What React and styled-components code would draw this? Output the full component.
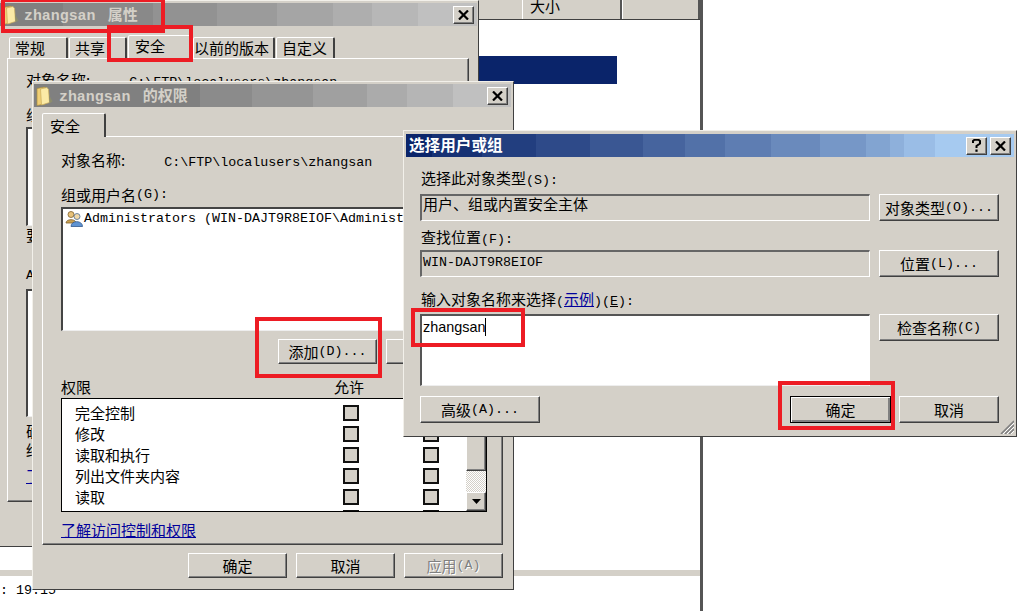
import styled, { createGlobalStyle, css } from 'styled-components'

const FACE = '#d4d0c8'
const CJK = `"Noto Sans CJK SC", "Liberation Sans", sans-serif`
const MONO = `"Liberation Mono", "Noto Sans CJK SC", monospace`

const bands = (from, to, stops) => {
	const a = from.match(/\w\w/g).map(h => parseInt(h, 16))
	const b = to.match(/\w\w/g).map(h => parseInt(h, 16))
	const parts = []
	let prev = 0
	stops.forEach((stop, i) => {
		const t = i / (stops.length - 1)
		const c = a.map((v, k) => Math.round(v + (b[k] - v) * t))
		parts.push(`rgb(${c.join(',')}) ${prev}px ${stop}px`)
		prev = stop
	})
	return `linear-gradient(90deg, ${parts.join(', ')})`
}

const Global = createGlobalStyle`
	html, body {
		margin: 0;
		padding: 0;
		background: #fff;
	}
	#root {
		width: 1023px;
		height: 611px;
		position: relative;
		overflow: hidden;
		font-family: ${CJK};
		font-size: 15px;
		line-height: 16px;
		color: #000;
	}
`

const raised = css`
	border-style: solid;
	border-width: 1px;
	border-color: #fff #404040 #404040 #fff;
	box-shadow: inset -1px -1px 0 #808080;
`

const Latin = styled.span`
	font-family: ${MONO};
	font-size: 13.33px;
`

/* explorer window behind the dialogs */
const Explorer = styled.div`
	position: absolute;
	left: 0;
	top: 0;
	width: 703px;
	height: 611px;
	box-sizing: border-box;
	border-right: 3px solid;
	border-image: linear-gradient(90deg, ${FACE} 0 1px, #555 1px 3px) 1;
	display: flex;
	flex-direction: column;
`
const HeaderRow = styled.div`
	height: 20px;
	flex: none;
	display: flex;
	justify-content: flex-end;
	background: ${FACE};
	border-bottom: 1px solid #404040;
	box-sizing: border-box;
`
const HeaderCell = styled.div`
	width: ${p => p.$w}px;
	box-sizing: border-box;
	padding-left: 7px;
	border-right: 2px solid #555;
	border-left: 1px solid #fff;
	margin-top: -2px;
	line-height: 16px;
`
const FileList = styled.div`
	flex: 1;
	padding-top: 36px;
`
const SelectedRow = styled.div`
	width: 617px;
	height: 28px;
	background: #0a246a;
`
const StatusStrip = styled.div`
	height: 6px;
	margin-top: 486px;
	background: ${FACE};
`
const StatusText = styled.div`
	font-family: ${MONO};
	font-size: 13.33px;
	margin-top: 7px;
	white-space: pre;
`

/* dialogs */
const Window = styled.div`
	position: absolute;
	left: ${p => p.$l}px;
	top: ${p => p.$t}px;
	width: ${p => p.$w}px;
	height: ${p => p.$h}px;
	box-sizing: border-box;
	background: ${FACE};
	border: 1px solid;
	border-color: #f2f0ea #404040 #404040 #f2f0ea;
	padding: ${p => p.$pad};
	display: flex;
	flex-direction: column;
	overflow: hidden;
`
const TitleBar = styled.div`
	height: ${p => p.$h}px;
	flex: none;
	display: flex;
	align-items: center;
	gap: 3px;
	padding-right: 3px;
	background: ${p => p.$bg};
	color: ${p => (p.$active ? '#fff' : FACE)};
	font-weight: 700;
`
const TitleText = styled.span`
	flex: 1;
	white-space: pre;
	padding-left: ${p => p.$pad}px;
	padding-bottom: ${p => (p.$active ? 3 : 0)}px;
	font-size: ${p => (p.$active ? 15.6 : 15)}px;
`
const TitleLatin = styled.span`
	font-family: ${MONO};
	font-size: 14.9px;
	font-weight: 700;
`
const CaptionButton = styled.div`
	width: 21px;
	height: 18px;
	flex: none;
	display: flex;
	align-items: center;
	justify-content: center;
	box-sizing: border-box;
	background: ${FACE};
	${raised}
`

const TabRow = styled.div`
	height: 21px;
	flex: none;
	display: flex;
	align-items: flex-end;
	gap: ${p => p.$gap || 0}px;
	margin-top: ${p => p.$top}px;
	padding-left: ${p => p.$left}px;
`
const Tab = styled.div`
	width: ${p => p.$w}px;
	height: ${p => (p.$on ? 24 : 21)}px;
	margin-bottom: ${p => (p.$on ? -1 : 0)}px;
	box-sizing: border-box;
	padding: ${p => p.$top ?? 2}px 0 0 ${p => p.$pad ?? 5}px;
	background: ${FACE};
	border-style: solid;
	border-width: 1px 2px 0 1px;
	border-color: #fff #404040 transparent #fff;
	border-radius: 2px 2px 0 0;
	position: relative;
	z-index: ${p => (p.$on ? 1 : 0)};
	white-space: nowrap;
`
const Page = styled.div`
	flex: ${p => (p.$h ? 'none' : 1)};
	height: ${p => (p.$h ? `${p.$h}px` : 'auto')};
	box-sizing: border-box;
	margin: 0 ${p => p.$right}px 0 ${p => p.$left}px;
	padding: ${p => p.$pad};
	${raised}
	display: flex;
	flex-direction: column;
	overflow: hidden;
`
const Line = styled.div`
	display: flex;
	height: 16px;
	margin-top: ${p => p.$top || 0}px;
	flex: none;
	white-space: pre;
`
const LineValue = styled.span`
	margin-left: ${p => p.$at}px;
`
const Sunken = styled.div`
	height: ${p => p.$h}px;
	width: ${p => p.$w}px;
	margin-top: ${p => p.$top || 0}px;
	flex: none;
	box-sizing: border-box;
	background: #fff;
	border-style: solid;
	border-width: 2px 1px 1px 2px;
	border-color: #444 ${FACE} #eee #444;
	display: flex;
	align-items: flex-start;
	padding: 1px 3px;
	white-space: nowrap;
	overflow: hidden;
`
const ListRow = styled.div`
	display: flex;
	align-items: center;
	gap: 1px;
	height: 18px;
	margin-left: -1px;
`
const Button = styled.div`
	width: ${p => p.$w}px;
	height: ${p => p.$h || 25}px;
	flex: none;
	box-sizing: border-box;
	display: flex;
	align-items: center;
	justify-content: center;
	white-space: pre;
	background: ${FACE};
	${raised}
	${p => p.$primary && css`
		border-color: #000;
		box-shadow: inset 1px 1px 0 #fff, inset -2px -2px 0 #808080;
	`}
	${p => p.$disabled && css`
		color: #808080;
		text-shadow: 1px 1px 0 #fff;
	`}
`
const ButtonRow = styled.div`
	display: flex;
	gap: 9px;
	flex: none;
	margin-top: ${p => p.$top || 0}px;
	justify-content: flex-end;
	padding-right: ${p => p.$right || 0}px;
`
const PermHead = styled.div`
	display: grid;
	grid-template-columns: 273px 80px auto;
	height: 16px;
	margin-top: 15px;
	flex: none;
`
const PermList = styled.div`
	width: 426px;
	height: 114px;
	margin-top: 3px;
	flex: none;
	box-sizing: border-box;
	background: #fff;
	border: 1px solid #000;
	display: flex;
	overflow: hidden;
`
const PermRows = styled.div`
	flex: 1;
	padding-top: 3px;
`
const PermRow = styled.div`
	display: grid;
	grid-template-columns: 268px 80px 16px;
	height: 21px;
	align-items: center;
	padding-left: 13px;
`
const Check = styled.div`
	width: 16px;
	height: 16px;
	box-sizing: border-box;
	border: 2px solid #111;
	background: ${FACE};
`
const ScrollBar = styled.div`
	width: 20px;
	flex: none;
	display: flex;
	flex-direction: column;
	background: repeating-conic-gradient(${FACE} 0 25%, #fff 0 50%) 0 0 / 2px 2px;
`
const ScrollThumb = styled.div`
	height: 72px;
	flex: none;
	box-sizing: border-box;
	background: ${FACE};
	${raised}
`
const ScrollArrow = styled.div`
	height: 19px;
	margin-top: auto;
	flex: none;
	box-sizing: border-box;
	background: ${FACE};
	display: flex;
	align-items: center;
	justify-content: center;
	${raised}
`
const Link = styled.span`
	color: #00009c;
	text-decoration: underline;
`
const UnderLatin = styled(Latin)`
	text-decoration: underline;
`
const BottomLink = styled.div`
	height: 16px;
	margin-top: 10px;
	flex: none;
`
const SelectGrid = styled.div`
	display: grid;
	grid-template-columns: 450px 120px;
	column-gap: 9px;
	padding: 13px 0 0 14px;
`
const GridLabel = styled.div`
	grid-column: 1 / -1;
	height: 16px;
	margin: ${p => p.$top || 0}px 0 ${p => p.$bottom}px 1px;
`
const ReadBox = styled.div`
	height: 27px;
	box-sizing: border-box;
	background: ${FACE};
	border-style: solid;
	border-width: 2px 1px 1px 2px;
	border-color: #666 #fff #fff #666;
	padding-left: 1px;
	line-height: 15px;
	white-space: pre;
`
const NameInput = styled.div`
	height: 72px;
	box-sizing: border-box;
	background: #fff;
	border-style: solid;
	border-width: 2px 1px 1px 2px;
	border-color: #555 #fff #eee #555;
	padding: 2px 1px;
	font-family: "Liberation Sans", sans-serif;
	font-size: 14.4px;
	line-height: 18px;
`
const Caret = styled.span`
	display: inline-block;
	width: 1px;
	height: 18px;
	background: #000;
	vertical-align: top;
`
const SelectFooter = styled.div`
	display: flex;
	gap: 8px;
	margin-top: 10px;
	padding: 0 0 0 14px;
	width: 593px;
	box-sizing: border-box;
`
const FooterGap = styled.div`
	flex: 1;
`
const Grip = styled.svg`
	position: absolute;
	right: 2px;
	bottom: 2px;
`
const RedBox = styled.div`
	position: absolute;
	left: ${p => p.$l}px;
	top: ${p => p.$t}px;
	width: ${p => p.$w}px;
	height: ${p => p.$h}px;
	box-sizing: border-box;
	border: 4px solid #ed1c24;
	z-index: 5;
`
const FolderIcon = styled.svg`
	flex: none;
	margin-left: 2px;
`

const Folder = () => (
	<FolderIcon width="17" height="20" viewBox="0 0 17 20">
		<path d="M1 2.5 L9 1 L9 18 L1 19.5 Z" fill="#f0cf76" stroke="#a98c3e" strokeWidth=".7" />
		<path d="M4.5 3 L11 1.5 L12.5 3.5 L13.5 16.5 L5.5 19 Z" fill="#fbeaa6" stroke="#c8ac5c" strokeWidth=".7" />
		<path d="M13 9 L16.5 15.5 L13.5 17.5 Z" fill="#8d8d6c" />
	</FolderIcon>
)

const Users = () => (
	<svg width="18" height="18" viewBox="0 0 18 18">
		<circle cx="6" cy="4.5" r="3" fill="#e8c27a" stroke="#7d5f2c" strokeWidth=".8" />
		<path d="M1 13 C1 8.5 11 8.5 11 13 Z" fill="#c9a050" stroke="#7d5f2c" strokeWidth=".8" />
		<circle cx="12" cy="6.5" r="3" fill="#f0d8a8" stroke="#4d6c94" strokeWidth=".8" />
		<path d="M6 16.5 C6 10 17.5 10 17.5 16.5 Z" fill="#5f93d2" stroke="#32598d" strokeWidth=".8" />
	</svg>
)

const CloseGlyph = () => (
	<svg width="11" height="10" viewBox="0 0 11 10">
		<path d="M1 0.5 L10 9.5 M10 0.5 L1 9.5" stroke="#000" strokeWidth="2.2" />
	</svg>
)

const HelpGlyph = () => (
	<svg width="9" height="13" viewBox="0 0 9 13">
		<path d="M1 4 V2 L2.5 0.8 H6.5 L8 2 V4.5 L4.5 7 V9" fill="none" stroke="#000" strokeWidth="2" />
		<path d="M3.4 10.5 H5.6 V12.8 H3.4 Z" fill="#000" />
	</svg>
)

const DownGlyph = () => (
	<svg width="9" height="5" viewBox="0 0 9 5">
		<path d="M0 0 H9 L4.5 5 Z" fill="#000" />
	</svg>
)

const perms = ['完全控制', '修改', '读取和执行', '列出文件夹内容', '读取', '写入']

const PropertiesWindow = () => (
	<Window $l={-2} $t={0} $w={481} $h={547} $pad="2px 1px">
		<TitleBar $h={23} $bg={bands('808080', 'c0c0c0', [63, 153, 217, 277, 333, 372, 418, 480])}>
			<Folder />
			<TitleText $pad={2}>
				<TitleLatin>zhangsan </TitleLatin> 属性
			</TitleText>
			<CaptionButton><CloseGlyph /></CaptionButton>
		</TitleBar>
		<TabRow $top={11} $left={9} $gap={1}>
			<Tab $w={59}>常规</Tab>
			<Tab $w={58}>共享</Tab>
			<Tab $w={64} $on $pad={6}>安全</Tab>
			<Tab $w={82} $pad={0}>以前的版本</Tab>
			<Tab $w={59}>自定义</Tab>
		</TabRow>
		<Page $left={7} $right={8} $h={444} $pad="13px 0 0 18px">
			<Line>
				对象名称:<LineValue $at={39}><Latin>C:\FTP\localusers\zhangsan</Latin></LineValue>
			</Line>
			<Line $top={19}>组</Line>
			<Sunken $w={300} $h={99} $top={4} />
			<Line $top={1}>要</Line>
			<Line $top={25}><Latin>A</Latin></Line>
			<Sunken $w={300} $h={128} $top={5} />
			<Line $top={6}>确</Line>
			<Line $top={3}>终</Line>
			<Line $top={10}><Link>了</Link></Line>
		</Page>
	</Window>
)

const PermissionWindow = () => (
	<Window $l={32} $t={81} $w={482} $h={509} $pad="2px 2px 2px 1px">
		<TitleBar $h={23} $bg={bands('808080', 'c0c0c0', [166, 218, 279, 333, 373, 419, 480])}>
			<Folder />
			<TitleText $pad={3}>
				<TitleLatin>zhangsan </TitleLatin> 的权限
			</TitleText>
			<CaptionButton><CloseGlyph /></CaptionButton>
		</TitleBar>
		<TabRow $top={8} $left={8}>
			<Tab $w={64} $on $pad={7} $top={4}>安全</Tab>
		</TabRow>
		<Page $left={8} $right={8} $h={409} $pad="15px 0 0 18px">
			<Line>
				对象名称:<LineValue $at={39}><Latin>C:\FTP\localusers\zhangsan</Latin></LineValue>
			</Line>
			<Line $top={19}>组或用户名<Latin>(G):</Latin></Line>
			<Sunken $w={426} $h={124} $top={4}>
				<ListRow>
					<Users />
					<Latin>Administrators (WIN-DAJT9R8EIOF\Administrators)</Latin>
				</ListRow>
			</Sunken>
			<ButtonRow $top={8} $right={17}>
				<Button $w={99}>添加<Latin>(D)...</Latin></Button>
				<Button $w={99}>删除<Latin>(R)</Latin></Button>
			</ButtonRow>
			<PermHead>
				<span>权限</span>
				<span>允许</span>
				<span>拒绝</span>
			</PermHead>
			<PermList>
				<PermRows>
					{perms.map(name => (
						<PermRow key={name}>
							<span>{name}</span>
							<Check />
							<Check />
						</PermRow>
					))}
				</PermRows>
				<ScrollBar>
					<ScrollThumb />
					<ScrollArrow><DownGlyph /></ScrollArrow>
				</ScrollBar>
			</PermList>
			<BottomLink><Link>了解访问控制和权限</Link></BottomLink>
		</Page>
		<ButtonRow $top={8} $right={8}>
			<Button $w={99}>确定</Button>
			<Button $w={99}>取消</Button>
			<Button $w={99} $disabled>应用<Latin>(A)</Latin></Button>
		</ButtonRow>
	</Window>
)

const SelectWindow = () => (
	<Window $l={403} $t={130} $w={614} $h={307} $pad="3px 2px">
		<TitleBar
			$h={23}
			$active
			$bg={bands('0a246a', 'a6caf0', [26, 76, 130, 184, 237, 279, 319, 365, 414, 460, 484, 498, 529, 610])}
		>
			<TitleText $pad={3} $active>选择用户或组</TitleText>
			<CaptionButton><HelpGlyph /></CaptionButton>
			<CaptionButton><CloseGlyph /></CaptionButton>
		</TitleBar>
		<SelectGrid>
			<GridLabel $bottom={8}>选择此对象类型<Latin>(S):</Latin></GridLabel>
			<ReadBox>用户、组或内置安全主体</ReadBox>
			<Button $w={120} $h={27}>对象类型<Latin>(O)...</Latin></Button>
			<GridLabel $top={8} $bottom={5}>查找位置<Latin>(F):</Latin></GridLabel>
			<ReadBox><Latin>WIN-DAJT9R8EIOF</Latin></ReadBox>
			<Button $w={120} $h={27}>位置<Latin>(L)...</Latin></Button>
			<GridLabel $top={14} $bottom={7}>
				输入对象名称来选择<Latin>(</Latin><Link>示例</Link><Latin>)(</Latin><UnderLatin>E</UnderLatin><Latin>):</Latin>
			</GridLabel>
			<NameInput>zhangsan<Caret /></NameInput>
			<Button $w={120} $h={27}>检查名称<Latin>(C)</Latin></Button>
		</SelectGrid>
		<SelectFooter>
			<Button $w={120} $h={27}>高级<Latin>(A)...</Latin></Button>
			<FooterGap />
			<Button $w={101} $h={27} $primary>确定</Button>
			<Button $w={100} $h={27}>取消</Button>
		</SelectFooter>
		<Grip width="14" height="14" viewBox="0 0 14 14">
			<path d="M14 1 L1 14 M14 5 L5 14 M14 9 L9 14" stroke="#808080" strokeWidth="1.6" />
			<path d="M14 3 L3 14 M14 7 L7 14 M14 11 L11 14" stroke="#fff" strokeWidth="1" />
		</Grip>
	</Window>
)

export default function App() {
	return (
		<>
			<Global />
			<Explorer>
				<HeaderRow>
					<HeaderCell $w={100}>大小</HeaderCell>
					<HeaderCell $w={78} />
				</HeaderRow>
				<FileList>
					<SelectedRow />
					<StatusStrip />
					<StatusText>{': 19:15'}</StatusText>
				</FileList>
			</Explorer>
			<PropertiesWindow />
			<PermissionWindow />
			<SelectWindow />
			<RedBox $l={1} $t={-2} $w={164} $h={35} />
			<RedBox $l={107} $t={25} $w={86} $h={37} />
			<RedBox $l={255} $t={317} $w={127} $h={61} />
			<RedBox $l={411} $t={308} $w={114} $h={39} />
			<RedBox $l={778} $t={381} $w={117} $h={49} />
		</>
	)
}
